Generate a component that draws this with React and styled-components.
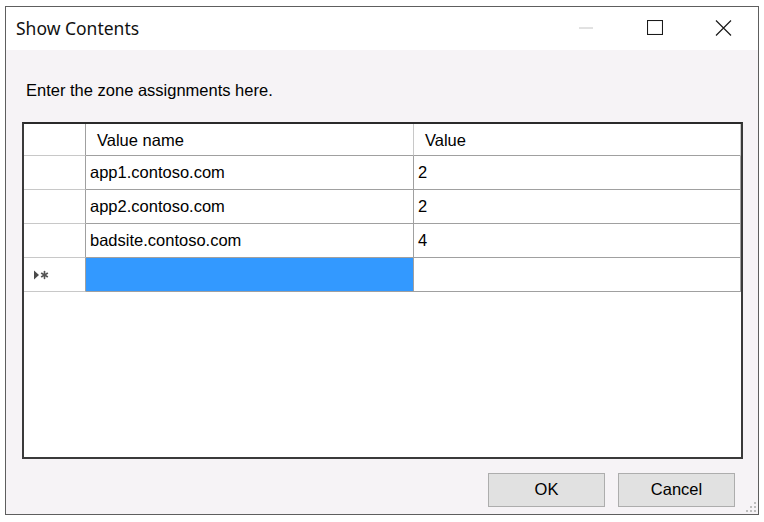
import React from "react";
import styled, { createGlobalStyle } from "styled-components";

const GlobalStyle = createGlobalStyle`
  html, body {
    margin: 0;
    padding: 0;
    background: #ffffff;
  }
  * {
    box-sizing: border-box;
  }
`;

const rows = [
  { name: "app1.contoso.com", value: "2" },
  { name: "app2.contoso.com", value: "2" },
  { name: "badsite.contoso.com", value: "4" },
];

function NewRowGlyph() {
  return (
    <svg width="17" height="10" viewBox="0 0 17 10">
      <path d="M1 0.5 L6 5 L1 9.5 Z" fill="#4a4a4a" />
      <g stroke="#555" strokeWidth="1.6" strokeLinecap="round">
        <line x1="11.5" y1="1.6" x2="11.5" y2="8.4" />
        <line x1="8.6" y1="3.3" x2="14.4" y2="6.7" />
        <line x1="8.6" y1="6.7" x2="14.4" y2="3.3" />
      </g>
    </svg>
  );
}

function SizeGrip() {
  const dots = [
    [8, 0],
    [4, 4],
    [8, 4],
    [0, 8],
    [4, 8],
    [8, 8],
  ];
  return (
    <Grip width="11" height="11" viewBox="0 0 11 11">
      {dots.map(([x, y]) => (
        <rect key={`${x}-${y}`} x={x} y={y} width="2" height="2" fill="#bdbdbd" />
      ))}
    </Grip>
  );
}

export default function App() {
  return (
    <>
      <GlobalStyle />
      <Window>
        <TitleBar>
          <Title>Show Contents</Title>
          <Controls>
            <CaptionButton>
              <svg width="14" height="2" viewBox="0 0 14 2">
                <line x1="0" y1="1" x2="14" y2="1" stroke="#c4c4c4" strokeWidth="1" />
              </svg>
            </CaptionButton>
            <CaptionButton>
              <svg width="16" height="15" viewBox="0 0 16 15">
                <rect x="0.5" y="0.5" width="15" height="14" fill="none" stroke="#1a1a1a" strokeWidth="1.1" />
              </svg>
            </CaptionButton>
            <CaptionButton>
              <svg width="17" height="16" viewBox="0 0 17 16">
                <path d="M1 0.5 L16 15.5 M16 0.5 L1 15.5" stroke="#1a1a1a" strokeWidth="1.2" />
              </svg>
            </CaptionButton>
          </Controls>
        </TitleBar>
        <Body>
          <Prompt>Enter the zone assignments here.</Prompt>
          <GridView>
            <Row $header>
              <RowHead />
              <HeadCell>Value name</HeadCell>
              <HeadCell>Value</HeadCell>
            </Row>
            {rows.map((r) => (
              <Row key={r.name}>
                <RowHead />
                <Cell>{r.name}</Cell>
                <Cell>{r.value}</Cell>
              </Row>
            ))}
            <Row>
              <RowHead>
                <NewRowGlyph />
              </RowHead>
              <Cell $selected />
              <Cell />
            </Row>
          </GridView>
          <Footer>
            <DialogButton>OK</DialogButton>
            <DialogButton>Cancel</DialogButton>
          </Footer>
          <SizeGrip />
        </Body>
      </Window>
    </>
  );
}

const Window = styled.div`
  margin: 6px 0 0 5px;
  width: 754px;
  height: 509px;
  border: 1px solid #5e5e5e;
  display: flex;
  flex-direction: column;
  background: #f6f3f6;
`;

const TitleBar = styled.div`
  height: 43px;
  flex: none;
  display: flex;
  align-items: center;
  justify-content: space-between;
  background: #ffffff;
  padding-left: 10px;
`;

const Title = styled.div`
  font-family: "Noto Sans", "Open Sans", sans-serif;
  font-size: 17.5px;
  color: #111;
  padding-bottom: 2px;
`;

const Controls = styled.div`
  display: flex;
  height: 100%;
`;

const CaptionButton = styled.div`
  width: 69px;
  height: 100%;
  display: flex;
  align-items: center;
  justify-content: center;
  padding-bottom: 2px;
`;

const Body = styled.div`
  position: relative;
  flex: 1;
  display: flex;
  flex-direction: column;
  padding: 31px 15px 0 16px;
  font-family: "Liberation Sans", Arial, sans-serif;
  font-size: 16.5px;
  color: #000;
`;

const Prompt = styled.div`
  line-height: 18px;
  padding-left: 4px;
`;

const GridView = styled.div`
  margin-top: 23px;
  height: 337px;
  border: 2px solid #3a3a3a;
  border-top-color: #2a2a2a;
  background: #ffffff;
`;

const Row = styled.div`
  display: grid;
  grid-template-columns: 62px 328px 1fr;
  height: ${(p) => (p.$header ? "32px" : "34px")};
`;

const RowHead = styled.div`
  border-right: 1px solid #a0a0a0;
  border-bottom: 1px solid #c8c8c8;
  display: flex;
  align-items: center;
  padding-left: 9px;
`;

const HeadCell = styled.div`
  border-right: 1px solid #c8c8c8;
  border-bottom: 1px solid #a0a0a0;
  display: flex;
  align-items: center;
  padding-left: 11px;
  padding-top: 2px;
`;

const Cell = styled.div`
  border-right: 1px solid #a0a0a0;
  border-bottom: 1px solid #a0a0a0;
  display: flex;
  align-items: center;
  padding-left: 4px;
  background: ${(p) => (p.$selected ? "#3399ff" : "#ffffff")};
`;

const Footer = styled.div`
  display: flex;
  justify-content: flex-end;
  gap: 13px;
  margin-top: 14px;
  padding-right: 8px;
`;

const DialogButton = styled.button`
  width: 117px;
  height: 34px;
  background: #e1e1e1;
  border: 1px solid #adadad;
  font-family: "Liberation Sans", Arial, sans-serif;
  font-size: 16.5px;
  color: #000;
  padding: 0 0 2px;
`;

const Grip = styled.svg`
  position: absolute;
  right: 1px;
  bottom: 1px;
`;
